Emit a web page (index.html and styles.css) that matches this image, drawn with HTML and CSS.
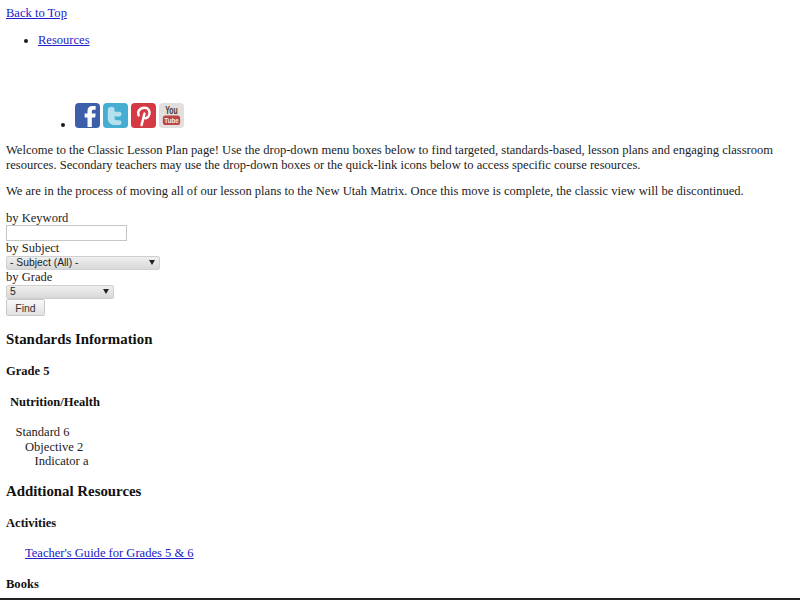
FILE: index.html
```html
<!DOCTYPE html>
<html lang="en">
<head>
    <meta charset="UTF-8">
    <title>Classic Lesson Plans</title>
    <link rel="stylesheet" href="styles.css">
</head>
<body>
    <div class="page">
        <a href="#">Back to Top</a>
        <ul class="top-links">
            <li><a href="#">Resources</a></li>
        </ul>

        <!-- Social icons -->
        <ul class="social">
            <li>
                <span class="icons">
                    <svg width="25" height="25" viewBox="0 0 26 26">
                        <rect width="26" height="26" rx="4" fill="#3d5ea9"/>
                        <path d="M13 25V15h-3v-4h3V8c0-3 2-5 5-5h3.500v4H19c-1 0-1.500 .5-1.500 2v2h4l-.5 4h-3.500v10z" fill="#fff"/>
                    </svg>
                    <svg width="25" height="25" viewBox="0 0 26 26">
                        <rect width="26" height="26" rx="4" fill="#47aed3"/>
                        <path d="M9 4c2 0 3 1 3 3v2h5c3 0 3 5 0 5h-5v1c0 2 1 3 3 3h2c3 0 3 5 0 5h-4c-5 0-8-3-8-7V7c0-2 2-3 4-3z" fill="#b5e1ef"/>
                    </svg>
                    <svg width="25" height="25" viewBox="0 0 26 26">
                        <rect width="26" height="26" rx="4" fill="#d53a44"/>
                        <path d="M11 23l3-12M8 13c-2-5 2-8 6-8s6 3 5 7-5 5-6 2" fill="none" stroke="#fff" stroke-width="2.500" stroke-linecap="round"/>
                    </svg>
                    <svg width="25" height="25" viewBox="0 0 26 26">
                        <rect width="26" height="26" rx="4" fill="#e2dfdc"/>
                        <rect x="4" y="13" width="18" height="10" rx="3" fill="#b9454a"/>
                        <text x="13" y="11.500" class="yt-you" textLength="13" lengthAdjust="spacingAndGlyphs">You</text>
                        <text x="13" y="21" class="yt-tube" textLength="15" lengthAdjust="spacingAndGlyphs">Tube</text>
                    </svg>
                </span>
            </li>
        </ul>

        <p>Welcome to the Classic Lesson Plan page! Use the drop-down menu boxes below to find targeted, standards-based, lesson plans and engaging classroom resources. Secondary teachers may use the drop-down boxes or the quick-link icons below to access specific course resources.</p>
        <p>We are in the process of moving all of our lesson plans to the New Utah Matrix. Once this move is complete, the classic view will be discontinued.</p>

        <form class="finder">
            <label>by Keyword</label>
            <input type="text" class="keyword">
            <label>by Subject</label>
            <div class="select subject"><span>- Subject (All) -</span><i></i></div>
            <label>by Grade</label>
            <div class="select grade"><span>5</span><i></i></div>
            <button type="button" class="find">Find</button>
        </form>

        <h3>Standards Information</h3>
        <h4>Grade 5</h4>
        <h4 class="area">Nutrition/Health</h4>
        <div class="standard">
            Standard 6
            <div class="nested">
                Objective 2
                <div class="nested">Indicator a</div>
            </div>
        </div>

        <h3 class="additional">Additional Resources</h3>
        <h4>Activities</h4>
        <p class="resource"><a href="#">Teacher's Guide for Grades 5 &amp; 6</a></p>
        <h4>Books</h4>
    </div>
    <div class="bottom-line"></div>
</body>
</html>
```

FILE: styles.css
```css
html, body {
    height: 100%;
}
body {
    margin: 0;
    background-color: #fff;
    color: #1c1c1c;
    font-family: "Liberation Serif", serif;
    font-size: 12.55px;
    line-height: 15px;
    overflow: hidden;
    position: relative;
}
.page {
    padding: 6px 6px 0;
}
a {
    color: #2020c8;
}
p {
    margin: 11px 0;
}
ul {
    margin: 0;
    padding: 0;
}
.top-links {
    margin-top: 12px;
    padding-left: 32px;
}
/* Social icons */
.social {
    margin-top: 55px;
    padding-left: 69px;
    height: 28.5px;
}
.icons {
    display: inline-flex;
    gap: 3px;
}
.icons svg {
    display: block;
}
.yt-you, .yt-tube {
    font-family: "Liberation Sans", sans-serif;
    font-weight: bold;
    text-anchor: middle;
}
.yt-you {
    font-size: 11px;
    fill: #3d3733;
}
.yt-tube {
    font-size: 8px;
    fill: #fbeeee;
}
/* Search form */
.finder {
    margin-top: 12px;
}
.finder label {
    display: block;
    height: 14.5px;
}
.keyword {
    display: block;
    box-sizing: border-box;
    width: 121px;
    height: 16px;
    margin: 0;
    padding: 0;
    border: 1px solid #c6c6c6;
    background-color: #fff;
}
.select {
    box-sizing: border-box;
    display: flex;
    align-items: center;
    justify-content: space-between;
    height: 14.5px;
    padding: 0 4px 0 3px;
    border: 1px solid #cfcfcf;
    border-radius: 2px;
    background: linear-gradient(#efefef, #d8d8d8);
    font-family: "Liberation Sans", sans-serif;
    font-size: 10.35px;
    color: #222;
}
.select i {
    border-left: 3px solid transparent;
    border-right: 3px solid transparent;
    border-top: 5px solid #222;
}
.subject {
    width: 154px;
}
.grade {
    width: 108px;
}
.find {
    display: block;
    box-sizing: border-box;
    width: 39px;
    height: 17px;
    margin: 0;
    padding: 0;
    border: 1px solid #c8c8c8;
    border-radius: 2px;
    background: linear-gradient(#f8f8f8, #e2e2e2);
    font-family: "Liberation Sans", sans-serif;
    font-size: 10.5px;
    color: #333;
}
h3 {
    font-size: 14.85px;
    line-height: 17px;
    margin: 14.5px 0 16px;
    color: #111;
}
.additional {
    margin-top: 14px;
}
h4 {
    font-size: 12.55px;
    line-height: 15px;
    margin: 15.5px 0;
    color: #111;
}
.area {
    margin: 16.5px 0 15px;
    padding-left: 4px;
}
.standard {
    padding-left: 9.5px;
    margin: 15px 0 14px;
    line-height: 14.6px;
}
.nested {
    padding-left: 9.5px;
}
.resource {
    padding-left: 19px;
    margin: 15.5px 0;
}
.bottom-line {
    position: absolute;
    left: 0;
    right: 0;
    bottom: 0;
    height: 2px;
    background-color: #222;
}
```
